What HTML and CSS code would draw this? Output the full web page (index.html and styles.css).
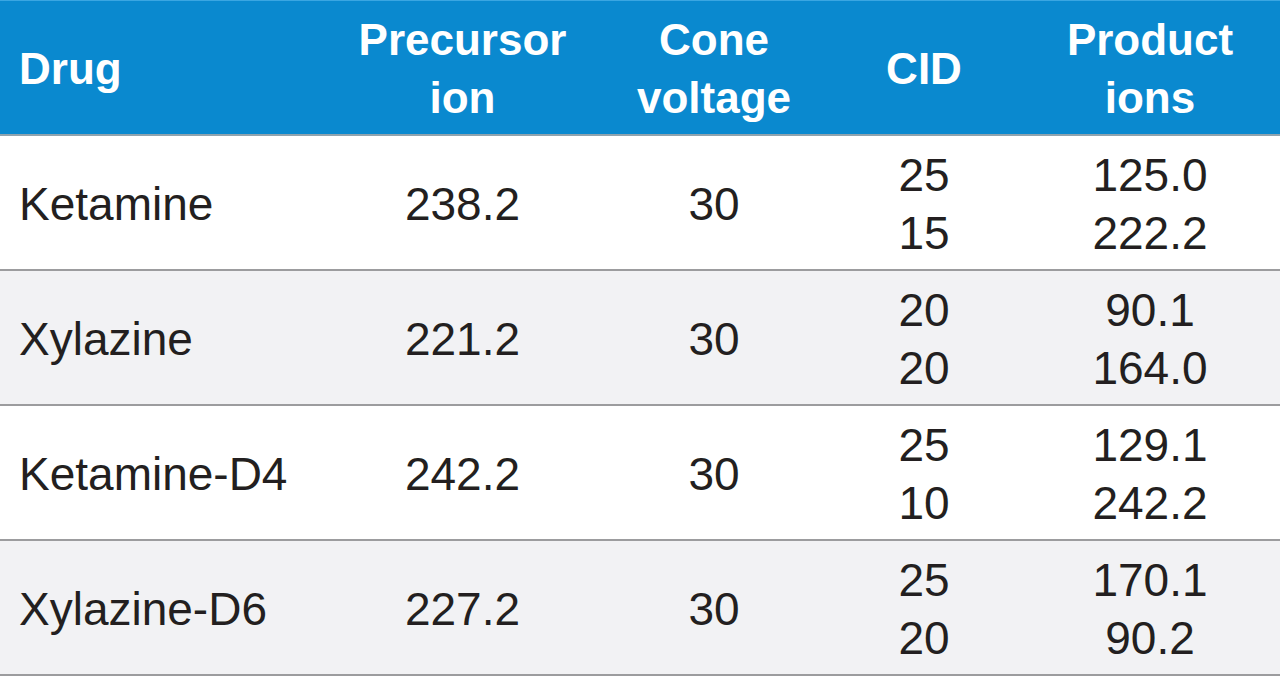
FILE: index.html
```html
<!DOCTYPE html>
<html>
<head>
<meta charset="utf-8">
<link rel="stylesheet" href="styles.css">
</head>
<body>
<table class="grid">
  <colgroup>
    <col class="c1"><col class="c2"><col class="c3"><col class="c4"><col class="c5">
  </colgroup>
  <thead>
    <tr>
      <th class="left">Drug</th>
      <th>Precursor<br>ion</th>
      <th>Cone<br>voltage</th>
      <th>CID</th>
      <th>Product<br>ions</th>
    </tr>
  </thead>
  <tbody>
    <tr>
      <td class="left">Ketamine</td>
      <td>238.2</td>
      <td>30</td>
      <td>25<br>15</td>
      <td>125.0<br>222.2</td>
    </tr>
    <tr class="alt">
      <td class="left">Xylazine</td>
      <td>221.2</td>
      <td>30</td>
      <td>20<br>20</td>
      <td>90.1<br>164.0</td>
    </tr>
    <tr>
      <td class="left">Ketamine-D4</td>
      <td>242.2</td>
      <td>30</td>
      <td>25<br>10</td>
      <td>129.1<br>242.2</td>
    </tr>
    <tr class="alt">
      <td class="left">Xylazine-D6</td>
      <td>227.2</td>
      <td>30</td>
      <td>25<br>20</td>
      <td>170.1<br>90.2</td>
    </tr>
  </tbody>
</table>
</body>
</html>
```
FILE: styles.css
```css
html, body {
  margin: 0;
  padding: 0;
  background: #ffffff;
}

.grid {
  width: 1280px;
  border-collapse: collapse;
  table-layout: fixed;
  font-family: "Liberation Sans", Arial, sans-serif;
  color: #231f20;
}

.c1 { width: 325px; }
.c2 { width: 275px; }
.c3 { width: 228px; }
.c4 { width: 192px; }
.c5 { width: 260px; }

.grid th {
  background: #0a89cf;
  color: #ffffff;
  font-weight: bold;
  font-size: 44px;
  line-height: 58px;
  height: 130px;
  padding: 3px 0 0 0;
  text-align: center;
  vertical-align: middle;
  border-top: 1px solid #3aa6e2;
  border-bottom: 2px solid #8fa3ae;
}

.grid td {
  font-size: 46px;
  line-height: 58px;
  height: 130px;
  padding: 3px 0 0 0;
  text-align: center;
  vertical-align: middle;
  border-bottom: 2px solid #9c9c9e;
  background: #ffffff;
}

.grid tr.alt td {
  background: #f2f2f4;
}

.grid .left {
  text-align: left;
  padding-left: 19px;
}
```
